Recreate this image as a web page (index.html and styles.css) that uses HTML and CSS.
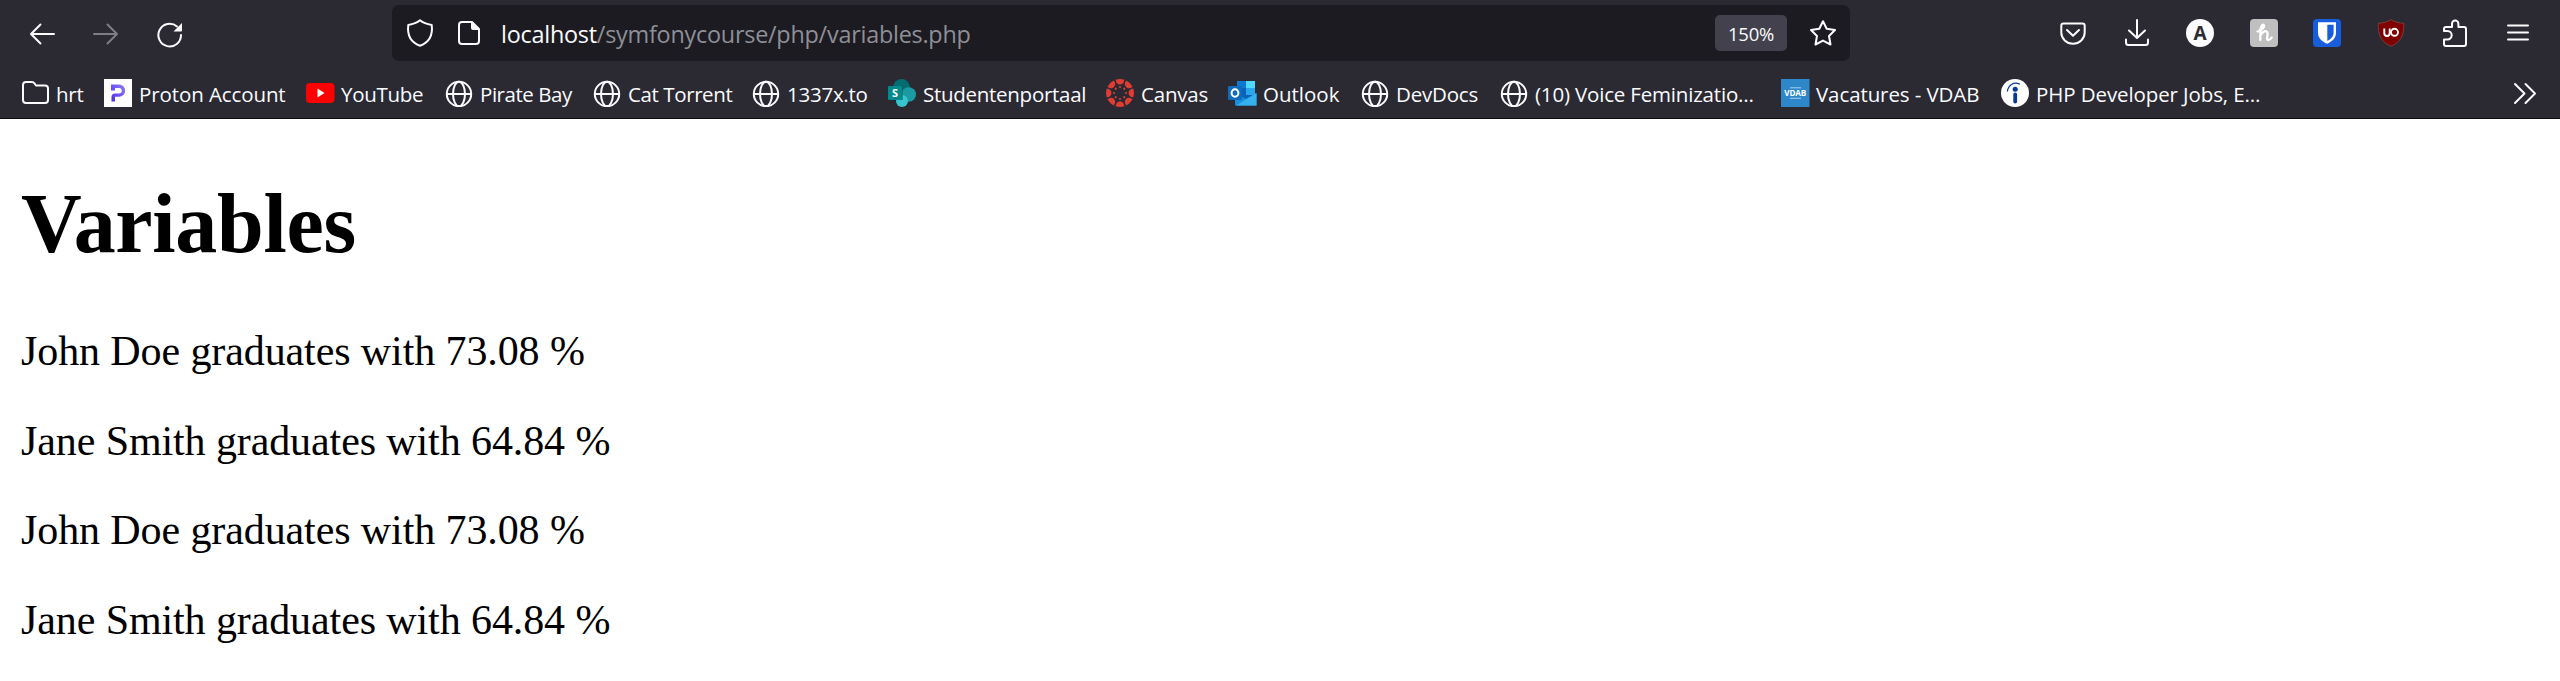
FILE: index.html
```html
<!DOCTYPE html>
<html lang="en">
<head>
<meta charset="utf-8">
<title>Variables</title>
<link rel="stylesheet" href="styles.css">
</head>
<body>
<svg class="defs" width="0" height="0">
  <symbol id="globe" viewBox="0 0 28 28"><g fill="none" stroke="#fbfbfe" stroke-width="2"><circle cx="14" cy="15" r="12.2"/><ellipse cx="14" cy="15" rx="6" ry="12.2"/><path d="M2 15h24"/></g></symbol>
</svg>
<header class="chrome">
  <nav class="toolbar">
    <div class="nav-buttons">
      <svg class="icon" viewBox="0 0 28 28"><path class="line" d="M26 15H3M12.500 5.500L3 15l9.500 9.500"/></svg>
      <svg class="icon dim" viewBox="0 0 28 28"><path class="line" d="M2 15h23M15.500 5.500L25 15l-9.500 9.500"/></svg>
      <svg class="icon" viewBox="0 0 28 28"><path class="line" d="M25 16A11.300 11.300 0 1 1 21 7.500"/><path d="M26 4v7.500q0 1-1 1h-7.500z" fill="#fbfbfe"/></svg>
    </div>
    <div class="urlbar">
      <svg class="icon" viewBox="0 0 28 28"><path class="line" d="M14 1.300C17.500 4.300 21.500 5.300 25.700 5.900C26.700 14 24.500 23 14 26.700C3.500 23 1.300 14 2.300 5.900C6.500 5.300 10.500 4.300 14 1.300z"/></svg>
      <svg class="icon page-icon" viewBox="0 0 28 28"><path class="line" d="M17 3H7Q4 3 4 6v16q0 3 3 3h14q3 0 3-3V10z"/><path d="M16 2.500V9q0 2 2 2h6.500z" fill="#fbfbfe"/></svg>
      <div class="url">localhost<span class="path">/symfonycourse/php/variables.php</span></div>
      <div class="zoom">150%</div>
      <svg class="icon" viewBox="0 0 28 28"><path class="line" d="M14 2.200L17.700 9.800L26 11L20 17L21.500 25.500L14 21.600L6.500 25.500L8 17L2 11L10.300 9.800z"/></svg>
    </div>
    <div class="actions">
      <svg class="icon" viewBox="0 0 28 28"><path class="line" d="M4.500 4.600h19q2.200 0 2.200 2.200V13.500a11.700 11.200 0 0 1-23.400 0V6.800q0-2.200 2.200-2.200z"/><path class="line" d="M8 11l6 5.700L20 11"/></svg>
      <svg class="icon" viewBox="0 0 28 28"><path class="line" d="M14 1v17M6 11.500l8 7.500 8-7.500M3 20.500v3Q3 26 5.500 26h17q2.500 0 2.500-2.500v-3"/></svg>
      <svg class="icon" viewBox="0 0 28 28"><circle cx="14" cy="14" r="14" fill="#fbfbfe"/><text class="glyph-a" x="14" y="20.500" text-anchor="middle">A</text></svg>
      <svg class="icon" viewBox="0 0 28 28"><rect width="28" height="28" rx="4" fill="#bfbfbf"/><path d="M7.500 12.500C12 11 15 8 13.800 6.200C12.500 4.500 10.500 8 10.300 12V21M10.300 17c2-5 7-6.500 7.300-2.500c.2 3-1.800 6.200.6 6.500q2 0 3.500-2.500" fill="none" stroke="#fff" stroke-width="2.300" stroke-linecap="round"/></svg>
      <svg class="icon" viewBox="0 0 28 28"><rect width="28" height="28" rx="4" fill="#175ddc"/><path d="M5 3.300h18V14c0 5-4 8.500-9 10.800C9 22.500 5 19 5 14z" fill="#fff"/><path d="M14.300 5.700h6.300V14c0 3.500-3 6.200-6.300 8z" fill="#175ddc"/></svg>
      <svg class="icon" viewBox="0 0 28 28"><path d="M14 .6C18 3.200 22 4 26.700 4.300C27 13 26 22 14 27.400C2 22 1 13 1.300 4.300C6 4 10 3.200 14 .6z" fill="#800000" stroke="#805050" stroke-width=".7"/><path d="M7.300 9.500v4.800q0 2.700 2.700 2.700t2.700-2.700V9.500" fill="none" stroke="#fff" stroke-width="1.900"/><circle cx="17.500" cy="13.300" r="3.500" fill="none" stroke="#fff" stroke-width="1.900"/></svg>
      <svg class="icon" viewBox="0 0 28 28"><path class="line" d="M3 12V10Q3 8 5 8H11V4.800a3.200 3.200 0 0 1 6.400 0V8H23q2 0 2 2V25q0 2-2 2H5q-2 0-2-2V20.500H6.500a4.200 4.200 0 0 0 0-8.400z"/></svg>
      <svg class="icon" viewBox="0 0 28 28"><path class="line" d="M4 6.400h20M4 13.400h20M4 20.400h20"/></svg>
    </div>
  </nav>
  <nav class="bookmarks">
    <a class="bm w-hrt"><svg class="icon" viewBox="0 0 28 28"><path class="line" d="M5 3h6q1.500 0 2.300 1.200L15 6.500h9q3 0 3 3V21q0 3-3 3H5q-3 0-3-3V6q0-3 3-3z"/></svg><span>hrt</span></a>
    <a class="bm w-proton"><svg class="icon" viewBox="0 0 28 28"><defs><linearGradient id="pg" x1="0" y1="1" x2="1" y2="0"><stop offset="0" stop-color="#4a2fc0"/><stop offset=".4" stop-color="#6d4aff"/><stop offset="1" stop-color="#8b80e8"/></linearGradient></defs><path d="M0 0h28v28H0z" fill="#fff"/><path d="M7 5.500h8a6 6 0 0 1 0 12.300h-4V22.500H7.500V18q0-3.500 3.500-3.500h4a2.700 2.700 0 0 0 0-5.500H11V11.500H7z" fill="url(#pg)"/></svg><span>Proton Account</span></a>
    <a class="bm w-youtube"><svg class="icon" viewBox="0 0 28 28"><rect x="0" y="4" width="28.500" height="20" rx="4" fill="#f00"/><path d="M11.500 9.500v9l7-4.500z" fill="#fff"/></svg><span>YouTube</span></a>
    <a class="bm w-pirate"><svg class="icon"><use href="#globe"/></svg><span>Pirate Bay</span></a>
    <a class="bm w-cat"><svg class="icon"><use href="#globe"/></svg><span>Cat Torrent</span></a>
    <a class="bm w-1337"><svg class="icon"><use href="#globe"/></svg><span>1337x.to</span></a>
    <a class="bm w-student"><svg class="icon" viewBox="0 0 28 28"><circle cx="13.500" cy="8.500" r="8.500" fill="#036c70"/><circle cx="20.700" cy="15.500" r="7.300" fill="#1a9ba1"/><circle cx="14" cy="22" r="6" fill="#37c6d0"/><path d="M5 7h10v14H5z" fill="#02585b" opacity=".5"/><rect y="7" width="14" height="14" rx="1" fill="#03898c"/><text class="glyph-s" x="7" y="18" text-anchor="middle">S</text></svg><span>Studentenportaal</span></a>
    <a class="bm w-canvas"><svg class="icon" viewBox="0 0 28 28"><g fill="#e03c31"><g id="seg"><path d="M9.600.7Q14-.7 18.400.7Q17.800 5.400 14 5.400T9.600.7z"/><circle cx="14" cy="8" r="1.100"/></g><use href="#seg" transform="rotate(45 14 14)"/><use href="#seg" transform="rotate(90 14 14)"/><use href="#seg" transform="rotate(135 14 14)"/><use href="#seg" transform="rotate(180 14 14)"/><use href="#seg" transform="rotate(225 14 14)"/><use href="#seg" transform="rotate(270 14 14)"/><use href="#seg" transform="rotate(315 14 14)"/></g></svg><span>Canvas</span></a>
    <a class="bm w-outlook"><svg class="icon" viewBox="0 0 28 28"><rect x="9" y="2" width="18" height="20" fill="#0a63b8"/><path d="M9 2h9v7H9z" fill="#0f78d4"/><path d="M18 2h9v7h-9z" fill="#50d9ff"/><path d="M18 9h9v7h-9z" fill="#28a8ea"/><path d="M7 14l11 6 10.500-6v12.500H7z" fill="#1490df"/><path d="M8 26.500L28.500 14v12.500z" fill="#35b1ee"/><rect y="7" width="14" height="14" rx="1" fill="#0f6cbd"/><ellipse cx="7" cy="14" rx="3.400" ry="3.800" fill="none" stroke="#fff" stroke-width="2"/></svg><span>Outlook</span></a>
    <a class="bm w-devdocs"><svg class="icon"><use href="#globe"/></svg><span>DevDocs</span></a>
    <a class="bm w-voice"><svg class="icon"><use href="#globe"/></svg><span>(10) Voice Feminizatio…</span></a>
    <a class="bm w-vdab"><svg class="icon" viewBox="0 0 28 28"><path d="M0 0h28.500v28H0z" fill="#2d87c9"/><path d="M9 8.800h11M9 19.300h11" stroke="#a9d0ec" stroke-width="1"/><text class="glyph-vdab" x="14.200" y="17.200" text-anchor="middle" textLength="22" lengthAdjust="spacingAndGlyphs">VDAB</text></svg><span>Vacatures - VDAB</span></a>
    <a class="bm w-php"><svg class="icon" viewBox="0 0 28 28"><circle cx="14" cy="14" r="14" fill="#fff"/><circle cx="14.200" cy="10.300" r="2.500" fill="#003a9b"/><path d="M14.200 15.500v7" stroke="#003a9b" stroke-width="3.800" stroke-linecap="round"/><path d="M6.300 12.500C7.500 5.500 13 2.500 19 5.200" fill="none" stroke="#003a9b" stroke-width="1.200"/></svg><span>PHP Developer Jobs, E…</span></a>
    <svg class="icon more" viewBox="0 0 28 28"><path class="line" d="M4 5l9.500 9.500L4 24M14.500 5l9.500 9.500L14.500 24"/></svg>
  </nav>
</header>
<main class="page">
  <h1>Variables</h1>
  <p>John Doe graduates with 73.08 %</p>
  <p>Jane Smith graduates with 64.84 %</p>
  <p>John Doe graduates with 73.08 %</p>
  <p>Jane Smith graduates with 64.84 %</p>
</main>
</body>
</html>
```
FILE: styles.css
```css
body { margin: 0; background: #fff; overflow: hidden; }
.defs { position: absolute; }
.chrome {
  height: 118px;
  border-bottom: 1px solid #0c0c0d;
  background: #2b2a33;
  color: #fbfbfe;
  font-family: "Open Sans", "Noto Sans", sans-serif;
}
.icon { width: 28px; height: 28px; flex: none; overflow: visible; }
.line { fill: none; stroke: #fbfbfe; stroke-width: 2; stroke-linecap: round; stroke-linejoin: round; }
.dim { opacity: .4; }
.toolbar { display: flex; align-items: center; height: 66px; }
.nav-buttons { display: flex; gap: 36px; width: 364px; padding-left: 28px; }
.urlbar {
  display: flex;
  align-items: center;
  box-sizing: border-box;
  width: 1458px;
  height: 56px;
  padding: 0 13px 0 14px;
  border-radius: 7px;
  background: #1c1b22;
}
.page-icon { margin-left: 21px; }
.url { flex: 1; margin-left: 18px; padding-top: 2px; font-size: 23.4px; line-height: 32px; letter-spacing: -.24px; white-space: nowrap; }
.path { color: #8f8f96; }
.zoom {
  width: 72px;
  height: 36px;
  margin-right: 22px;
  border-radius: 5px;
  background: #42414d;
  font-size: 18.5px;
  line-height: 38px;
  letter-spacing: -.2px;
  text-align: center;
}
.actions { display: flex; gap: 35.6px; margin-left: 209px; }
.glyph-a { font: bold 19px "Open Sans", sans-serif; fill: #2b2a33; }
.glyph-s { font: bold 11px "Open Sans", sans-serif; fill: #fff; }
.glyph-vdab { font: bold 8.500px "Open Sans", sans-serif; fill: #fff; }
.bookmarks {
  display: flex;
  align-items: center;
  box-sizing: border-box;
  height: 52px;
  padding: 2px 21px 0;
  font-size: 20.5px;
}
.bm { display: flex; align-items: center; gap: 7px; flex: none; white-space: nowrap; line-height: 28px; }
.bm span { padding-top: 2px; }
.w-hrt { width: 83px; letter-spacing: -.2px; }
.w-proton { width: 202px; letter-spacing: -.1px; }
.w-youtube { width: 139px; letter-spacing: -.3px; }
.w-pirate { width: 148px; letter-spacing: -.45px; }
.w-cat { width: 159px; letter-spacing: -.4px; }
.w-1337 { width: 136px; letter-spacing: -.25px; }
.w-student { width: 218px; letter-spacing: -.28px; }
.w-canvas { width: 122px; letter-spacing: -.2px; }
.w-outlook { width: 133px; }
.w-devdocs { width: 139px; letter-spacing: -.2px; }
.w-voice { width: 281px; letter-spacing: -.18px; }
.w-vdab { width: 220px; letter-spacing: -.1px; }
.w-php { letter-spacing: -.1px; }
.more { margin-left: auto; }
.page { padding: 0 21px; font-family: "Liberation Serif", "Times New Roman", serif; color: #000; }
.page h1 { margin: 0; padding: 57px 0 56px; font-size: 84px; line-height: 96px; letter-spacing: -.3px; }
.page p { margin: 0 0 42px; font-size: 42px; line-height: 47.67px; letter-spacing: -.1px; }
```
